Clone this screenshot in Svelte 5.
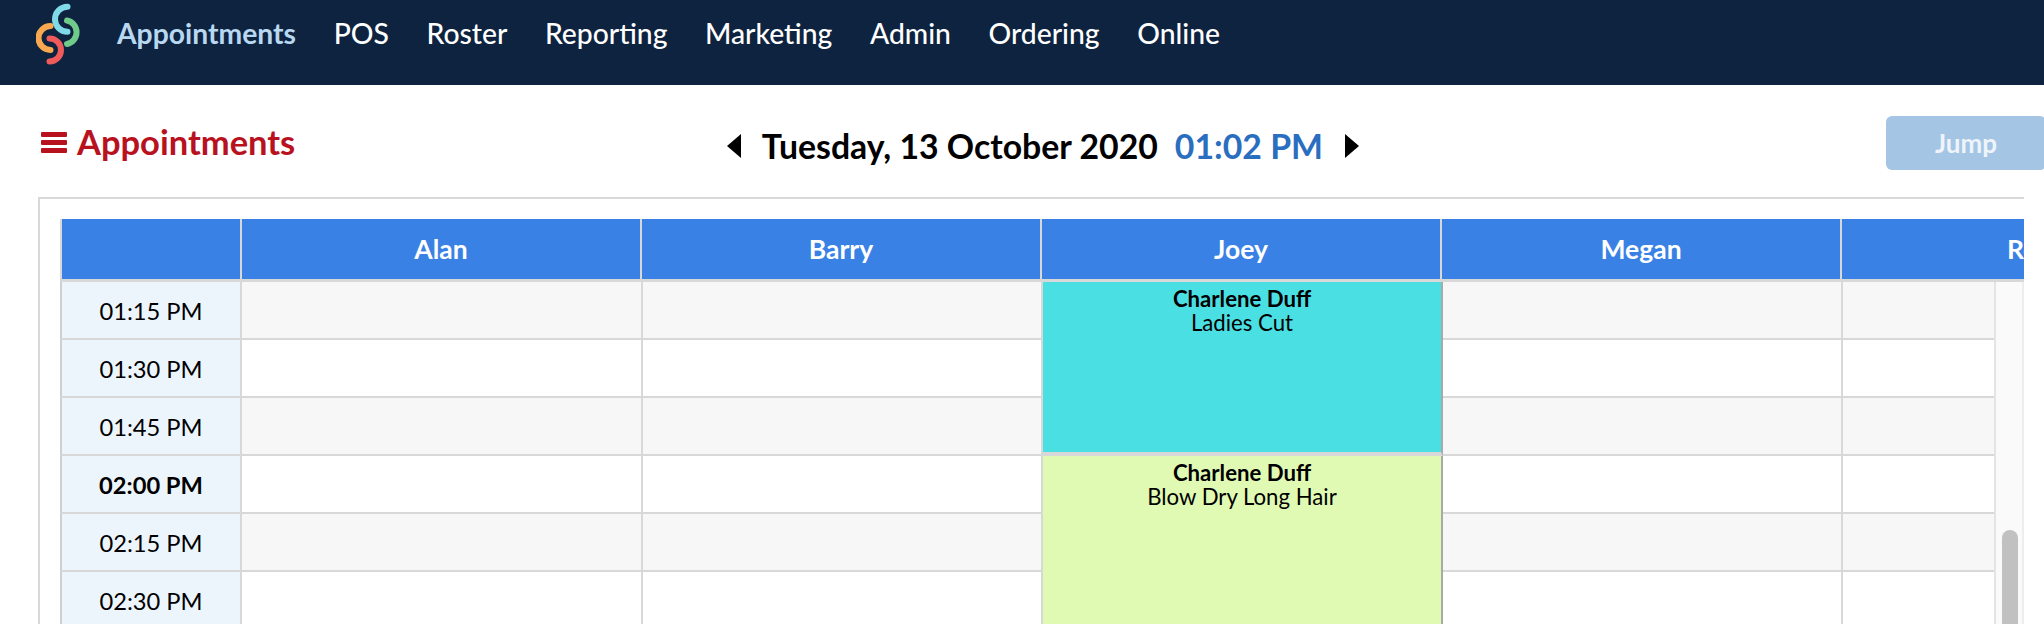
<script lang="ts">
  const navItems = ['POS', 'Roster', 'Reporting', 'Marketing', 'Admin', 'Ordering', 'Online'];
  const staff = ['Alan', 'Barry', 'Joey', 'Megan', 'Robin'];
  const times = ['01:15 PM', '01:30 PM', '01:45 PM', '02:00 PM', '02:15 PM', '02:30 PM'];
</script>

<header class="nav">
  <svg class="logo" width="50" height="62" viewBox="0 0 50 62" fill="none" stroke-width="6" stroke-linecap="round">
    <path d="M31.5 3.7 A12.5 12.5 0 0 0 31.5 28.7" stroke="#7fd9e6" />
    <path d="M31 17.5 A12 12 0 0 1 31 41" stroke="#6ecb8a" />
    <path d="M14.5 23 A12 12 0 0 0 14.5 47" stroke="#f9a84f" />
    <path d="M13.5 35.5 A11.5 11.5 0 0 1 13.5 58.5" stroke="#ef5a5a" />
  </svg>
  <a class="active" href="#appointments">Appointments</a>
  {#each navItems as item}
    <a href="#{item.toLowerCase()}">{item}</a>
  {/each}
</header>

<section class="toolbar">
  <h1>
    <span class="bars"><i></i><i></i><i></i></span>
    Appointments
  </h1>
  <div class="date">
    <span class="caret left"></span>
    <span>Tuesday, 13 October 2020</span>
    <span class="time">01:02 PM</span>
    <span class="caret right"></span>
  </div>
  <button class="jump" disabled>Jump</button>
</section>

<section class="panel">
  <div class="head">
    <div class="corner"></div>
    {#each staff as name}
      <div class="staff">{name}</div>
    {/each}
  </div>
  <div class="scroller">
    <div class="grid">
      {#each times as time, i}
        <div class="slot" class:hour={time === '02:00 PM'} style="grid-row: {i + 1}">{time}</div>
        {#each staff as name, c}
          {#if name !== 'Joey'}
            <div class="cell" class:alt={i % 2 === 0} style="grid-row: {i + 1}; grid-column: {c + 2}"></div>
          {/if}
        {/each}
      {/each}
      <div class="event cyan">
        <strong>Charlene Duff</strong>
        <span>Ladies Cut</span>
      </div>
      <div class="event green">
        <strong>Charlene Duff</strong>
        <span>Blow Dry Long Hair</span>
      </div>
    </div>
    <div class="track"><div class="thumb"></div></div>
  </div>
</section>

<style>
  :global(body) {
    margin: 0;
    height: 624px;
    overflow: hidden;
    background: #fff;
    font-family: Lato, 'Liberation Sans', sans-serif;
    color: #000;
  }
  .nav {
    height: 85px;
    background: #0e2340;
    display: flex;
    align-items: flex-start;
    gap: 37.6px;
    position: relative;
    padding-left: 117px;
    box-sizing: border-box;
  }
  .logo {
    position: absolute;
    left: 36px;
    top: 3px;
  }
  .nav a {
    color: #fff;
    font-size: 28.3px;
    font-weight: 500;
    line-height: 32px;
    margin-top: 17px;
    text-decoration: none;
  }
  .nav a.active {
    color: #b8d7f0;
    font-weight: 700;
  }
  .toolbar {
    height: 112px;
    display: flex;
    align-items: flex-start;
    width: 2046px;
    overflow: hidden;
    box-sizing: border-box;
    padding-left: 41px;
    position: relative;
  }
  h1 {
    margin: 37px 0 0;
    display: flex;
    align-items: center;
    gap: 10px;
    color: #b8121f;
    font-size: 34.5px;
    line-height: 40px;
    font-weight: 700;
  }
  .bars {
    display: flex;
    flex-direction: column;
    gap: 3px;
    width: 26px;
  }
  .bars i {
    display: block;
    height: 5px;
    border-radius: 1px;
    background: #b8121f;
  }
  .date {
    display: flex;
    align-items: center;
    margin: 41px 0 0 431.5px;
    font-size: 33.8px;
    line-height: 40px;
    font-weight: 700;
    gap: 17px;
  }
  .time {
    color: #2a6ebf;
  }
  .caret {
    width: 0;
    height: 0;
    border-top: 12px solid transparent;
    border-bottom: 12px solid transparent;
  }
  .caret.left {
    border-right: 14px solid #000;
    margin-right: 4px;
  }
  .caret.right {
    border-left: 14px solid #000;
    margin-left: 4.5px;
  }
  .jump {
    position: absolute;
    left: 1886px;
    top: 31px;
    width: 160px;
    height: 54px;
    border: 0;
    border-radius: 6px;
    background: #a4c5e4;
    color: #eef4fa;
    font: 700 26px Lato, sans-serif;
  }
  .panel {
    margin-left: 38px;
    border-top: 2px solid #d8d8d8;
    border-left: 2px solid #d8d8d8;
    padding: 20px 0 0 20px;
    width: 1986px;
    box-sizing: border-box;
    overflow: hidden;
  }
  .head {
    display: flex;
    width: 1964px;
    height: 60px;
    overflow: hidden;
    background: #3981e4;
    border-left: 2px solid #d8d8d8;
    box-sizing: border-box;
  }
  .corner {
    flex: 0 0 180px;
    box-sizing: border-box;
    border-right: 2px solid #d8d8d8;
  }
  .staff {
    flex: 0 0 400px;
    box-sizing: border-box;
    border-right: 2px solid #d8d8d8;
    color: #fff;
    font-size: 26.5px;
    font-weight: 700;
    line-height: 61px;
    text-align: center;
    white-space: nowrap;
  }
  .scroller {
    display: flex;
    width: 1964px;
    height: 345px;
    overflow: hidden;
    border-top: 3px solid #d8d8d8;
    box-sizing: border-box;
  }
  .grid {
    flex: 0 0 1934px;
    display: grid;
    grid-template-columns: 182px 401px repeat(4, 400px);
    grid-auto-rows: 58px;
    overflow: hidden;
  }
  .slot {
    grid-column: 1;
    box-sizing: border-box;
    border-left: 2px solid #cfcfcf;
    border-right: 2px solid #d8d8d8;
    border-bottom: 2px solid #d8d8d8;
    background: #edf5fc;
    font-size: 23.7px;
    line-height: 58px;
    text-align: center;
  }
  .slot.hour {
    font-weight: 700;
  }
  .cell {
    box-sizing: border-box;
    border-right: 2px solid #d8d8d8;
    border-bottom: 2px solid #d8d8d8;
    background: #fff;
  }
  .cell.alt {
    background: #f7f7f7;
  }
  .event {
    grid-column: 4;
    box-sizing: border-box;
    display: flex;
    flex-direction: column;
    align-items: center;
    border-right: 2px solid #a9a9a9;
    border-bottom: 4px solid #d8d8d8;
    font-size: 22.2px;
    line-height: 24px;
    padding-top: 5px;
  }
  .event.cyan {
    grid-row: 1 / span 3;
    background: #4adfe3;
  }
  .event.green {
    grid-row: 4 / span 3;
    background: #e0fab4;
  }
  .track {
    flex: 0 0 30px;
    box-sizing: border-box;
    background: #fafafa;
    border-left: 2px solid #e4e4e4;
    border-right: 2px solid #ededed;
    position: relative;
  }
  .thumb {
    position: absolute;
    left: 6px;
    top: 248px;
    width: 16px;
    height: 200px;
    border-radius: 8px;
    background: #c1c1c1;
  }
</style>
